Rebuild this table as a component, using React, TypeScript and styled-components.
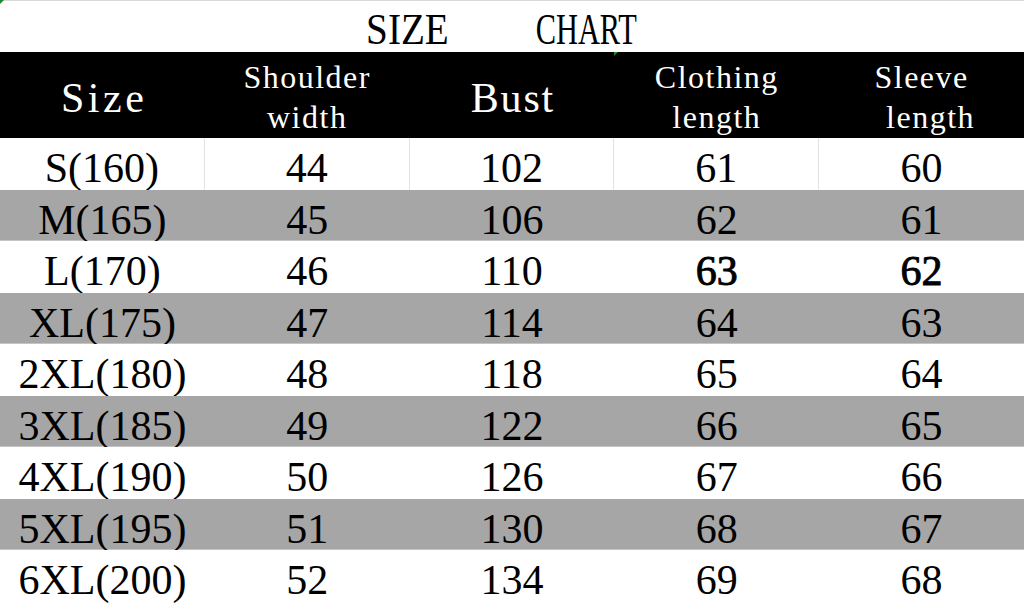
import React from "react";
import styled, { createGlobalStyle, css } from "styled-components";

const serif = `"Liberation Serif", "DejaVu Serif", serif`;

const GlobalStyle = createGlobalStyle`
  html, body {
    margin: 0;
    padding: 0;
    background: #ffffff;
  }
  body {
    font-family: ${serif};
    color: #000;
  }
  * { box-sizing: border-box; }
`;

const Page = styled.div`
  position: relative;
  width: 1024px;
  height: 607px;
  overflow: hidden;
  display: flex;
  flex-direction: column;
  background: #fff;
  font-family: ${serif};
`;

const CornerMark = styled.span`
  position: absolute;
  top: 0;
  left: 0;
  width: 0;
  height: 0;
  border-top: 4px solid #1f8a2a;
  border-right: 4px solid transparent;
`;

const TitleBar = styled.div`
  height: 52px;
  flex: none;
  border-top: 1px solid #d9d9d9;
  display: flex;
  justify-content: center;
  align-items: flex-start;
  gap: 59px;
  padding-top: 7px;
  padding-right: 3px;
`;

const TitleWord = styled.span<{ $scale: number }>`
  display: inline-block;
  font-size: 44px;
  line-height: 1;
  white-space: nowrap;
  transform: scaleX(${(p) => p.$scale});
`;

const Grid = styled.div`
  display: grid;
  grid-template-columns: repeat(5, 1fr);
`;

const HeaderRow = styled(Grid)`
  height: 86px;
  flex: none;
  background: #000;
  color: #fff;
`;

const HeaderCell = styled.div<{ $top: number }>`
  position: relative;
  display: flex;
  flex-direction: column;
  align-items: center;
  padding-top: ${(p) => p.$top}px;
`;

const BigLabel = styled.span<{ $spacing: number }>`
  font-size: 42px;
  line-height: 1;
  letter-spacing: ${(p) => p.$spacing}px;
  margin-right: -${(p) => p.$spacing}px;
`;

const SmallLabel = styled.span<{ $shift?: number }>`
  font-size: 32px;
  line-height: 40px;
  letter-spacing: 1.5px;
  padding-left: ${(p) => p.$shift ?? 0}px;
  white-space: nowrap;
`;

const CellMark = styled.span`
  position: absolute;
  top: 0;
  left: 0;
  width: 0;
  height: 0;
  border-top: 4px solid #1f8a2a;
  border-right: 4px solid transparent;
`;

const Body = styled.div`
  flex: 1;
  display: grid;
  grid-template-rows: repeat(8, 51.5px) 1fr;
`;

const Row = styled(Grid)<{ $shade: boolean }>`
  background: ${(p) => (p.$shade ? "#a6a6a6" : "#ffffff")};
  ${(p) =>
    p.$shade &&
    css`
      border-bottom: 1px solid #c4c4c4;
    `}
`;

const Cell = styled.div<{ $lines: boolean; $bold?: boolean }>`
  display: flex;
  justify-content: center;
  align-items: flex-start;
  padding-top: 9px;
  font-size: 42px;
  line-height: 1;
  white-space: nowrap;
  ${(p) =>
    p.$bold &&
    css`
      -webkit-text-stroke: 0.9px #000;
    `}
  ${(p) =>
    p.$lines &&
    css`
      &:not(:last-child) {
        border-right: 1px solid #e2e2e2;
      }
    `}
`;

const rows: string[][] = [
  ["S(160)", "44", "102", "61", "60"],
  ["M(165)", "45", "106", "62", "61"],
  ["L(170)", "46", "110", "63", "62"],
  ["XL(175)", "47", "114", "64", "63"],
  ["2XL(180)", "48", "118", "65", "64"],
  ["3XL(185)", "49", "122", "66", "65"],
  ["4XL(190)", "50", "126", "67", "66"],
  ["5XL(195)", "51", "130", "68", "67"],
  ["6XL(200)", "52", "134", "69", "68"],
];

const boldCells: Record<string, boolean> = { "2-3": true, "2-4": true };

export default function App() {
  return (
    <>
      <GlobalStyle />
      <Page>
        <CornerMark />
        <TitleBar>
          <TitleWord $scale={0.89}>SIZE</TitleWord>
          <TitleWord $scale={0.69}>CHART</TitleWord>
        </TitleBar>
        <HeaderRow>
          <HeaderCell $top={25}>
            <BigLabel $spacing={3.5}>Size</BigLabel>
          </HeaderCell>
          <HeaderCell $top={5}>
            <SmallLabel>Shoulder</SmallLabel>
            <SmallLabel>width</SmallLabel>
          </HeaderCell>
          <HeaderCell $top={25}>
            <BigLabel $spacing={1.8}>Bust</BigLabel>
          </HeaderCell>
          <HeaderCell $top={5}>
            <CellMark />
            <SmallLabel>Clothing</SmallLabel>
            <SmallLabel>length</SmallLabel>
          </HeaderCell>
          <HeaderCell $top={5}>
            <SmallLabel>Sleeve</SmallLabel>
            <SmallLabel $shift={18}>length</SmallLabel>
          </HeaderCell>
        </HeaderRow>
        <Body>
          {rows.map((r, i) => (
            <Row key={r[0]} $shade={i % 2 === 1}>
              {r.map((v, j) => (
                <Cell key={j} $lines={i === 0} $bold={boldCells[`${i}-${j}`]}>
                  {v}
                </Cell>
              ))}
            </Row>
          ))}
        </Body>
      </Page>
    </>
  );
}
